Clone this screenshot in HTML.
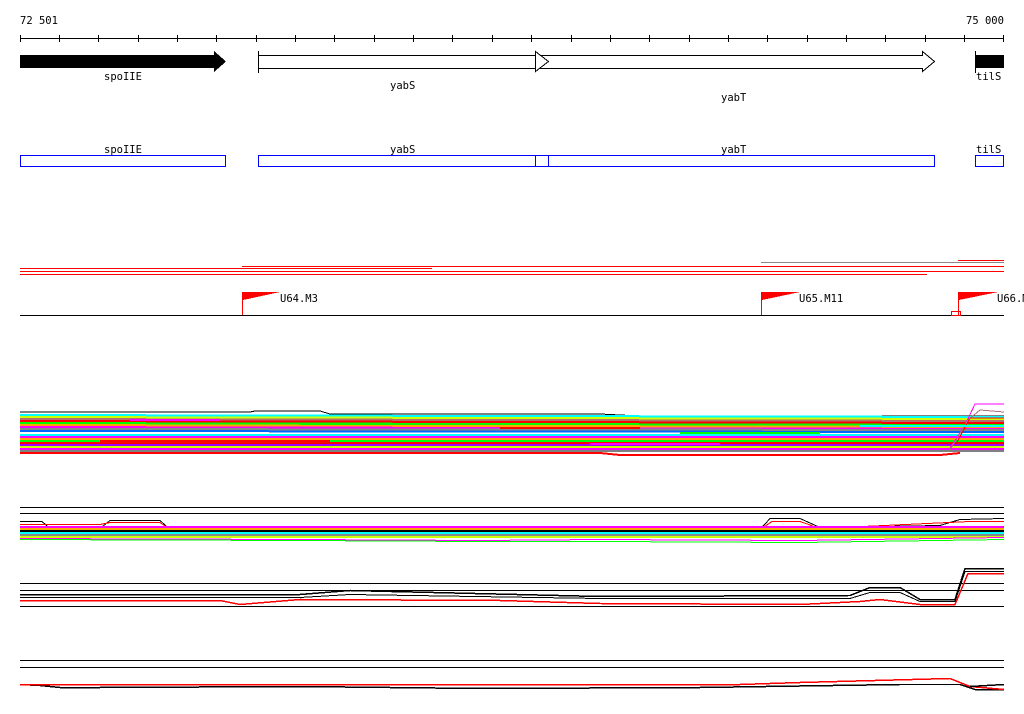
<!DOCTYPE html>
<html><head><meta charset="utf-8"><style>
html,body{margin:0;padding:0;background:#fff;width:1024px;height:714px;overflow:hidden}
svg{display:block}
text{font-family:"DejaVu Sans Mono","Liberation Mono",monospace;font-size:10.5px;fill:#000}
</style></head><body>
<svg width="1024" height="714" viewBox="0 0 1024 714" shape-rendering="crispEdges">
<text x="20" y="24">72 501</text>
<text x="966" y="24">75 000</text>
<line x1="20" y1="38.5" x2="1004" y2="38.5" stroke="#000"/>
<g stroke="#000">
<line x1="20.5" y1="35" x2="20.5" y2="42"/><line x1="59.5" y1="35" x2="59.5" y2="42"/><line x1="98.5" y1="35" x2="98.5" y2="42"/><line x1="138.5" y1="35" x2="138.5" y2="42"/><line x1="177.5" y1="35" x2="177.5" y2="42"/><line x1="216.5" y1="35" x2="216.5" y2="42"/><line x1="256.5" y1="35" x2="256.5" y2="42"/><line x1="295.5" y1="35" x2="295.5" y2="42"/><line x1="334.5" y1="35" x2="334.5" y2="42"/><line x1="374.5" y1="35" x2="374.5" y2="42"/><line x1="413.5" y1="35" x2="413.5" y2="42"/><line x1="452.5" y1="35" x2="452.5" y2="42"/><line x1="492.5" y1="35" x2="492.5" y2="42"/><line x1="531.5" y1="35" x2="531.5" y2="42"/><line x1="571.5" y1="35" x2="571.5" y2="42"/><line x1="610.5" y1="35" x2="610.5" y2="42"/><line x1="649.5" y1="35" x2="649.5" y2="42"/><line x1="689.5" y1="35" x2="689.5" y2="42"/><line x1="728.5" y1="35" x2="728.5" y2="42"/><line x1="767.5" y1="35" x2="767.5" y2="42"/><line x1="807.5" y1="35" x2="807.5" y2="42"/><line x1="846.5" y1="35" x2="846.5" y2="42"/><line x1="885.5" y1="35" x2="885.5" y2="42"/><line x1="925.5" y1="35" x2="925.5" y2="42"/><line x1="964.5" y1="35" x2="964.5" y2="42"/><line x1="1003.5" y1="35" x2="1003.5" y2="42"/>
</g>
<polygon points="20,55 214,55 214,51 226,61.5 214,72 214,68 20,68" fill="#000"/>
<text x="104" y="80">spoIIE</text>
<line x1="258.5" y1="51" x2="258.5" y2="73" stroke="#000"/>
<rect x="258.5" y="55.5" width="277" height="13" fill="#fff" stroke="#000"/>
<text x="390" y="89">yabS</text>
<polygon points="535.5,55.5 922.5,55.5 922.5,51.5 934.5,61.5 922.5,71.5 922.5,68.5 535.5,68.5" fill="#fff" stroke="#000"/>
<polygon points="535.5,51.5 548.5,61.5 535.5,71.5" fill="#fff" stroke="#000"/>
<text x="721" y="101">yabT</text>
<line x1="975.5" y1="51" x2="975.5" y2="73" stroke="#000"/>
<rect x="975" y="55" width="29" height="13" fill="#000"/>
<text x="976" y="80">tilS</text>
<g fill="none" stroke="#00f">
<rect x="20.5" y="155.5" width="205" height="11"/>
<rect x="258.5" y="155.5" width="277" height="11"/>
<rect x="535.5" y="155.5" width="13" height="11"/>
<rect x="548.5" y="155.5" width="386" height="11"/>
<rect x="975.5" y="155.5" width="28" height="11"/>
</g>
<text x="104" y="153">spoIIE</text>
<text x="390" y="153">yabS</text>
<text x="721" y="153">yabT</text>
<text x="976" y="153">tilS</text>
<line x1="761" y1="262.5" x2="1004" y2="262.5" stroke="#888"/>
<line x1="958" y1="260.5" x2="1004" y2="260.5" stroke="#f00"/>
<line x1="242" y1="266.5" x2="1004" y2="266.5" stroke="#f00"/>
<line x1="20" y1="268.5" x2="432" y2="268.5" stroke="#f00"/>
<line x1="20" y1="271.5" x2="1004" y2="271.5" stroke="#f00"/>
<line x1="20" y1="274.5" x2="927" y2="274.5" stroke="#f00"/>
<line x1="20" y1="315.5" x2="1004" y2="315.5" stroke="#000"/>
<g fill="#f00" stroke="#f00">
<line x1="242.5" y1="292" x2="242.5" y2="315"/><polygon points="243,292 280,292 243,300" stroke="none"/>
<line x1="761.5" y1="292" x2="761.5" y2="315"/><polygon points="762,292 800,292 762,300" stroke="none"/>
<line x1="958.5" y1="292" x2="958.5" y2="315"/><polygon points="959,292 998,292 959,300" stroke="none"/>
<rect x="951.5" y="311.5" width="9" height="4" fill="none"/>
</g>
<text x="280" y="302">U64.M3</text>
<text x="799" y="302">U65.M11</text>
<text x="997" y="302">U66.M</text>
<g fill="none" stroke-width="2">
<polyline points="20,412 250,412 255,411 320,411 330,414 600,414 640,416 1004,416" stroke="#000" stroke-width="1"/>
<line x1="20" y1="415" x2="1004" y2="417" stroke="#0ff"/>
<line x1="20" y1="417" x2="1004" y2="419" stroke="#cf0"/>
<line x1="20" y1="419" x2="1004" y2="421" stroke="#b07070"/>
<line x1="20" y1="421" x2="1004" y2="423" stroke="#f00"/>
<line x1="20" y1="423" x2="1004" y2="425" stroke="#0f0"/>
<line x1="20" y1="425" x2="1004" y2="427" stroke="#ffa500"/>
<line x1="20" y1="427" x2="1004" y2="429" stroke="#f0f"/>
<line x1="20" y1="429" x2="1004" y2="430" stroke="#888"/>
<line x1="20" y1="431" x2="1004" y2="432" stroke="#06f"/>
<line x1="20" y1="433" x2="1004" y2="434" stroke="#fff" stroke-width="1"/>
<line x1="20" y1="435" x2="1004" y2="435" stroke="#0ff"/>
<line x1="20" y1="437" x2="1004" y2="437" stroke="#f0f"/>
<line x1="20" y1="439" x2="1004" y2="439" stroke="#ffa500"/>
<line x1="20" y1="441" x2="1004" y2="441" stroke="#0f0"/>
<line x1="20" y1="443" x2="1004" y2="443" stroke="#f00"/>
<line x1="20" y1="445" x2="1004" y2="445" stroke="#90f"/>
<line x1="20" y1="447" x2="1004" y2="447" stroke="#cf0"/>
<line x1="20" y1="449" x2="1004" y2="449" stroke="#f0f"/>
<line x1="20" y1="451" x2="1004" y2="451" stroke="#000" stroke-width="1"/>
<polyline points="20,453 600,453 620,455 940,455 960,453" stroke="#f00"/>
<polyline points="950,448 965,425 975,404 1004,404" stroke="#f0f" stroke-width="1"/>
<polyline points="950,450 968,420 980,410 1004,412" stroke="#b07070" stroke-width="1"/>
<polyline points="955,446 970,418 1004,418" stroke="#f00" stroke-width="1"/>
<line x1="130" y1="420" x2="220" y2="420" stroke="#f0f"/>
<line x1="300" y1="424" x2="420" y2="424" stroke="#0f0"/>
<line x1="500" y1="428" x2="640" y2="428" stroke="#f00"/>
<line x1="680" y1="433" x2="820" y2="433" stroke="#0f0"/>
<line x1="860" y1="426" x2="1004" y2="426" stroke="#0ff"/>
<line x1="100" y1="441" x2="330" y2="441" stroke="#f00"/>
<line x1="590" y1="444" x2="720" y2="444" stroke="#f0f"/>
</g>
<line x1="20" y1="507.5" x2="1004" y2="507.5" stroke="#000"/>
<line x1="20" y1="513.5" x2="1004" y2="513.5" stroke="#000"/>
<g fill="none">
<polyline points="20,521.5 42,521.5 50,528.5 100,528.5 110,520.5 160,520.5 170,529.5 760,529.5 770,518.5 800,518.5 820,527.5 940,525.5 960,519.5 1004,518.5" stroke="#000"/>
<polyline points="20,524.5 40,524.5 100,524.5 110,522.5 160,522.5 170,529.5 760,529.5 772,521.5 800,521.5 820,528.5 970,521.5 1004,521.5" stroke="#f00"/>
<line x1="20" y1="527" x2="1004" y2="527" stroke="#f0f" stroke-width="2"/>
<line x1="20" y1="529" x2="1004" y2="529" stroke="#ffa500" stroke-width="2"/>
<line x1="20" y1="531" x2="1004" y2="531" stroke="#000" stroke-width="2"/>
<line x1="20" y1="533" x2="1004" y2="533" stroke="#0ff" stroke-width="2"/>
<line x1="20" y1="535" x2="1004" y2="535" stroke="#888" stroke-width="2"/>
<line x1="20" y1="537" x2="1004" y2="537" stroke="#cf0" stroke-width="2"/>
<polyline points="20,538.5 300,539.5 480,540.5 600,539.5 800,540.5 1004,537.5" stroke="#f0f"/>
<polyline points="20,539.5 300,540.5 480,541.5 600,541.5 800,542.5 1004,539.5" stroke="#0f0"/>
</g>
<line x1="20" y1="583.5" x2="1004" y2="583.5" stroke="#000"/>
<line x1="20" y1="590.5" x2="1004" y2="590.5" stroke="#000"/>
<line x1="20" y1="606.5" x2="1004" y2="606.5" stroke="#000"/>
<g fill="none">
<polyline points="20,594.5 300,594.5 350,590.5 600,596.5 850,595.5 870,587.5 900,587.5 920,599.5 955,599.5 965,568.5 1004,568.5" stroke="#000" stroke-width="1.5"/>
<polyline points="20,597.5 300,597.5 350,594.5 600,598.5 850,598.5 870,592.5 900,592.5 920,601.5 955,601.5 965,571.5 1004,571.5" stroke="#000"/>
<polyline points="20,600.5 220,600.5 240,604.5 300,599.5 500,600.5 600,603.5 800,604.5 860,601.5 880,599.5 920,604.5 955,604.5 968,573.5 1004,573.5" stroke="#f00" stroke-width="1.5"/>
</g>
<line x1="20" y1="660.5" x2="1004" y2="660.5" stroke="#000"/>
<line x1="20" y1="667.5" x2="1004" y2="667.5" stroke="#000"/>
<g fill="none">
<polyline points="20,684.5 40,685.5 60,687.5 100,687.5 300,686.5 480,688.5 700,687.5 900,684.5 960,684.5 975,689.5 1004,689.5" stroke="#000" stroke-width="1.5"/>
<polyline points="20,684.5 740,684.5 800,682.5 950,678.5 970,686.5 1004,689.5" stroke="#f00" stroke-width="1.5"/>
<polyline points="970,686.5 1004,684.5" stroke="#000" stroke-width="1.5"/>
</g>
</svg>
</body></html>
